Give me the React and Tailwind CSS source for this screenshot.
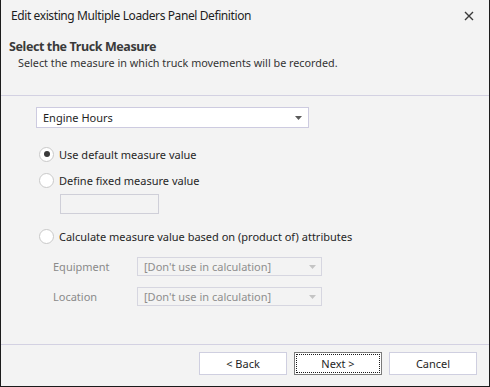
function Radio({ checked, label }) {
  return (
    <div className="flex items-center h-[16px] ml-[3px]">
      <span className="w-[15px] h-[15px] rounded-full border border-[#c9c9c9] bg-white flex items-center justify-center shrink-0">
        {checked && <span className="w-[6px] h-[6px] rounded-full bg-[#3a3a3a]" />}
      </span>
      <span className="ml-[5px] text-[#262626]">{label}</span>
    </div>
  )
}

function Caret({ color = '#5a5a5a' }) {
  return (
    <svg width="7" height="4" viewBox="0 0 7 4">
      <path d="M0 0 H7 L3.5 4 Z" fill={color} />
    </svg>
  )
}

function DisabledCombo() {
  return (
    <div className="w-[185px] h-[19px] border border-[#d6d6e0] bg-[#f3f3f3] flex items-center justify-between pl-[6px] pr-[5px] text-[#8e8e8e]">
      <span>[Don't use in calculation]</span>
      <Caret color="#c4c4c4" />
    </div>
  )
}

function Button({ children, focused }) {
  return (
    <button
      className={`w-[88px] h-[23px] bg-white flex items-center justify-center text-[#1f1f1f] ${
        focused ? 'border border-[#7a7a7a] p-[1px]' : 'border border-[#cfcfe0]'
      }`}
    >
      {focused ? (
        <span className="w-full h-full border border-dotted border-[#1a1a1a] flex items-center justify-center">{children}</span>
      ) : (
        children
      )}
    </button>
  )
}

export default function App() {
  return (
    <div
      className="w-[490px] h-[387px] bg-[#f3f3f3] border border-[#1b1b1b] border-t-0 flex flex-col text-[11px] leading-none overflow-hidden"
      style={{ fontFamily: '"Noto Sans", "Open Sans", sans-serif' }}
    >
      <div className="h-[32px] flex items-center justify-between pl-[10px] pr-[15px] shrink-0">
        <span className="text-[#1e1e1e] text-[12px] tracking-[-0.4px]">Edit existing Multiple Loaders Panel Definition</span>
        <svg width="10" height="10" viewBox="0 0 10 10" stroke="#3a3a3a" strokeWidth="1.4">
          <path d="M1 1 L9 9 M9 1 L1 9" />
        </svg>
      </div>

      <div className="h-[63px] pl-[8px] pt-[9px] shrink-0">
        <div className="font-bold text-[#3a3a3a] text-[12.5px] tracking-[-0.4px]">Select the Truck Measure</div>
        <div className="pl-[9px] mt-[4px] text-[#333] text-[10.8px]">Select the measure in which truck movements will be recorded.</div>
      </div>

      <div className="h-[1px] bg-[#d3d1e2] shrink-0" />

      <div className="flex-1 pl-[35px] pt-[11px]">
        <div className="w-[273px] h-[21px] bg-white border border-[#cdcbe0] flex items-center justify-between pl-[6px] pr-[6px] text-[#1f1f1f]">
          <span>Engine Hours</span>
          <Caret />
        </div>

        <div className="mt-[18px] flex flex-col">
          <Radio checked label="Use default measure value" />
          <div className="mt-[10px]">
            <Radio label="Define fixed measure value" />
          </div>
          <div className="ml-[24px] mt-[6px] w-[99px] h-[20px] border border-[#cfcfd8] bg-[#f3f3f3]" />
          <div className="mt-[14px]">
            <Radio label="Calculate measure value based on (product of) attributes" />
          </div>
        </div>

        <div className="mt-[13px] ml-[17px] flex flex-col gap-[11px] text-[#8a8a8a]">
          <div className="flex items-center">
            <span className="w-[84px]">Equipment</span>
            <DisabledCombo />
          </div>
          <div className="flex items-center">
            <span className="w-[84px]">Location</span>
            <DisabledCombo />
          </div>
        </div>
      </div>

      <div className="h-[1px] bg-[#d3d1e2] shrink-0" />
      <div className="h-[41px] flex items-start justify-end gap-[7px] pr-[12px] pt-[7px] shrink-0">
        <Button>&lt; Back</Button>
        <Button focused>Next &gt;</Button>
        <Button>Cancel</Button>
      </div>
    </div>
  )
}
